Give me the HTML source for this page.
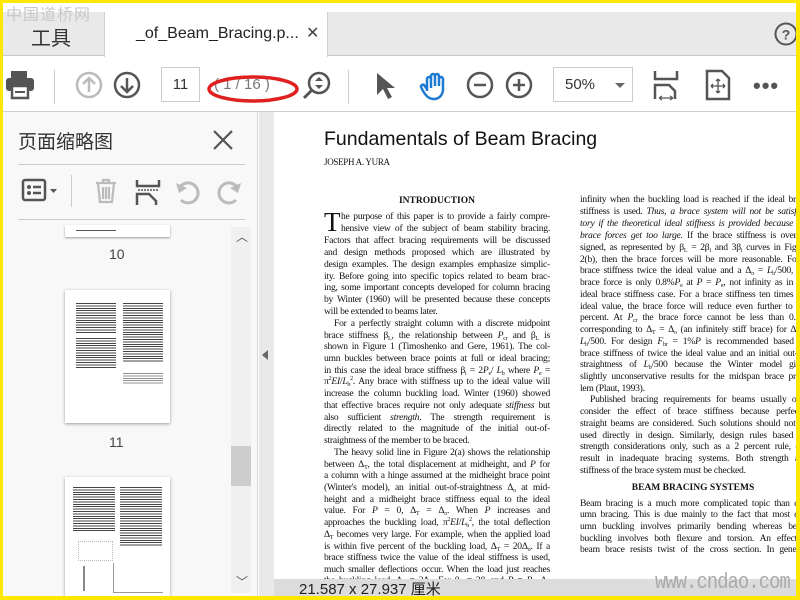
<!DOCTYPE html>
<html><head><meta charset="utf-8">
<style>
*{margin:0;padding:0;box-sizing:border-box}
body{width:800px;height:600px;position:relative;overflow:hidden;background:#ffe800;font-family:"Liberation Sans","Noto Sans CJK SC",sans-serif}
.abs{position:absolute}
#win{position:absolute;left:3px;top:3px;width:793px;height:593px;background:#fff;overflow:hidden}
.tl{position:absolute;font-family:"Liberation Serif",serif;font-size:9.6px;letter-spacing:-0.25px;word-spacing:-1.2px;color:#111;white-space:nowrap;line-height:12px;height:12px;text-align:justify;text-align-last:justify;overflow:hidden}
.tl.l{text-align-last:left;word-spacing:0}
.c1{left:321px;width:226px}
.c2{left:577px;width:228px}
i{font-style:italic}
sub{font-size:6px;vertical-align:-2px;line-height:0}
sup{font-size:6px;vertical-align:4px;line-height:0}
.blk{position:absolute;background:repeating-linear-gradient(#444 0 1px,#fff 1px 2.4px)}
</style></head><body>
<div id="win">
<div class="abs" style="left:0;top:9px;width:793px;height:44px;background:#e9e9e9;border-bottom:1px solid #c8c8c8"></div>
<div class="abs" style="left:101px;top:9px;width:224px;height:45px;background:#fff;border-left:1px solid #d0d0d0;border-right:1px solid #d0d0d0"></div>
<div class="abs" style="left:3px;top:-2px;font-size:16px;color:#c8c8c8;letter-spacing:1px">中国道桥网</div>
<div class="abs" style="left:28px;top:19px;font-size:20px;color:#333">工具</div>
<div class="abs" style="left:133px;top:22px;font-size:16px;color:#222">_of_Beam_Bracing.p...</div>
<div class="abs" style="left:303px;top:20px;font-size:16px;color:#444">✕</div>
<svg class="abs" style="left:771px;top:19px" width="24" height="28"><circle cx="12" cy="12" r="10.5" fill="none" stroke="#555" stroke-width="2"/><text x="12" y="17.5" font-size="14" font-weight="bold" text-anchor="middle" fill="#555" font-family="Liberation Sans">?</text></svg>
<div class="abs" style="left:0;top:108px;width:793px;height:1px;background:#d0d0d0"></div>
<svg class="abs" style="left:2px;top:66px" width="30" height="32"><rect x="6" y="2" width="16" height="7" fill="#555"/><rect x="1" y="9" width="28" height="13" rx="3" fill="#555"/><rect x="7" y="17" width="16" height="12" fill="#fff" stroke="#555" stroke-width="2.5"/><rect x="10" y="22" width="10" height="2" fill="#555"/></svg>
<div class="abs" style="left:51px;top:67px;width:1px;height:34px;background:#ccc"></div>
<svg class="abs" style="left:72px;top:68px" width="28" height="28"><circle cx="14" cy="14" r="12" fill="none" stroke="#bbb" stroke-width="2.5"/><path d="M14 21V8M8 13l6-6 6 6" fill="none" stroke="#bbb" stroke-width="2.5"/></svg>
<svg class="abs" style="left:110px;top:68px" width="28" height="28"><circle cx="14" cy="14" r="12" fill="none" stroke="#555" stroke-width="2.5"/><path d="M14 7v13M8 15l6 6 6-6" fill="none" stroke="#555" stroke-width="2.5"/></svg>
<div class="abs" style="left:158px;top:64px;width:39px;height:35px;border:1px solid #ccc;font-size:15px;color:#333;text-align:center;line-height:33px">11</div>
<div class="abs" style="left:211px;top:73px;font-size:15px;color:#777">( 1 / 16 )</div>
<svg class="abs" style="left:202px;top:70px" width="100" height="34"><ellipse cx="48" cy="16" rx="44" ry="12" fill="none" stroke="#e02020" stroke-width="3.5"/></svg>
<svg class="abs" style="left:299px;top:68px" width="30" height="30"><circle cx="17" cy="12" r="10" fill="none" stroke="#555" stroke-width="2.5"/><path d="M10 19l-8 8" stroke="#555" stroke-width="3"/><path d="M13 10l4-4 4 4M13 14l4 4 4-4" fill="#555"/></svg>
<div class="abs" style="left:345px;top:67px;width:1px;height:34px;background:#ccc"></div>
<svg class="abs" style="left:371px;top:68px" width="22" height="30"><path d="M3 2v22l6-6 5 10 4-2-5-9h8z" fill="#555"/></svg>
<svg class="abs" style="left:416px;top:68px" width="30" height="32"><path d="M8 20V8a2 2 0 014 0v9M12 14V5a2 2 0 014 0v10M16 14V5a2 2 0 014 0v10M20 15V8a2 2 0 014 0v10c0 6-4 10-9 10s-8-3-11-8l-2-4a2 2 0 013-2l3 4" fill="none" stroke="#1f7ad2" stroke-width="2.5" stroke-linejoin="round"/></svg>
<svg class="abs" style="left:463px;top:68px" width="28" height="28"><circle cx="14" cy="14" r="12" fill="none" stroke="#555" stroke-width="2.5"/><path d="M8 14h12" stroke="#555" stroke-width="2.5"/></svg>
<svg class="abs" style="left:502px;top:68px" width="28" height="28"><circle cx="14" cy="14" r="12" fill="none" stroke="#555" stroke-width="2.5"/><path d="M8 14h12M14 8v12" stroke="#555" stroke-width="2.5"/></svg>
<div class="abs" style="left:550px;top:64px;width:80px;height:35px;border:1px solid #ccc;font-size:15px;color:#333;line-height:33px;padding-left:11px">50%</div>
<div class="abs" style="left:612px;top:80px;width:0;height:0;border-left:5px solid transparent;border-right:5px solid transparent;border-top:5px solid #666"></div>
<svg class="abs" style="left:649px;top:66px" width="28" height="36"><path d="M3 2v8h22V2M3 30V16h14l6 6v8" fill="none" stroke="#555" stroke-width="2.5"/><path d="M7 29h14M7 29l3-2M7 29l3 2M21 29l-3-2M21 29l-3 2" stroke="#555" stroke-width="1.2"/></svg>
<svg class="abs" style="left:702px;top:66px" width="26" height="32"><path d="M2 2h15l7 7v21H2z" fill="none" stroke="#555" stroke-width="2.5"/><path d="M13 10v14M6 17h14M13 10l-2 2M13 10l2 2M13 24l-2-2M13 24l2-2M6 17l2-2M6 17l2 2M20 17l-2-2M20 17l-2 2" stroke="#555" stroke-width="1.3"/></svg>
<div class="abs" style="left:750px;top:70px;font-size:22px;color:#555;letter-spacing:1px;font-weight:bold">•••</div>
<div class="abs" style="left:0;top:109px;width:255px;height:484px;background:#f8f8f8;border-right:1px solid #d6d6d6"></div>
<div class="abs" style="left:15px;top:124px;font-size:19px;color:#333">页面缩略图</div>
<svg class="abs" style="left:208px;top:125px" width="24" height="24"><path d="M3 3l18 18M21 3L3 21" stroke="#555" stroke-width="2.2"/></svg>
<div class="abs" style="left:15px;top:161px;width:227px;height:1px;background:#ccc"></div>
<svg class="abs" style="left:18px;top:175px" width="40" height="26"><rect x="2" y="2" width="22" height="20" rx="2" fill="none" stroke="#555" stroke-width="2.5"/><circle cx="8" cy="9" r="2" fill="#555"/><circle cx="8" cy="15" r="2" fill="#555"/><path d="M12 9h8M12 15h8" stroke="#555" stroke-width="2.5"/><path d="M29 11h7l-3.5 4z" fill="#555"/></svg>
<div class="abs" style="left:68px;top:172px;width:1px;height:32px;background:#ccc"></div>
<svg class="abs" style="left:90px;top:175px" width="28" height="28"><path d="M3 5h20M10 5V2h6v3M5 5l2 19h12l2-19M10 9v12M13 9v12M16 9v12" fill="none" stroke="#bbb" stroke-width="2.2"/></svg>
<svg class="abs" style="left:131px;top:175px" width="28" height="28"><path d="M3 2v6h22V2" fill="none" stroke="#555" stroke-width="2.5"/><path d="M4 12h20" stroke="#555" stroke-width="1.5" stroke-dasharray="2 1"/><path d="M3 27V16h12l7 7v4" fill="none" stroke="#555" stroke-width="2.5"/></svg>
<svg class="abs" style="left:171px;top:175px" width="30" height="28"><path d="M7 22a10 10 0 1 0-1-13" fill="none" stroke="#bbb" stroke-width="3"/><path d="M2 5l3 10 8-5z" fill="#bbb"/></svg>
<svg class="abs" style="left:211px;top:175px" width="30" height="28"><path d="M22 22a10 10 0 1 1 1-13" fill="none" stroke="#bbb" stroke-width="3"/><path d="M27 5l-3 10-8-5z" fill="#bbb"/></svg>
<div class="abs" style="left:15px;top:216px;width:227px;height:1px;background:#ccc"></div>
<div class="abs" style="left:62px;top:222px;width:105px;height:12px;background:#fff;box-shadow:0 1px 2px #999"></div>
<div class="abs" style="left:73px;top:227px;width:40px;height:1px;background:#555"></div>
<div class="abs" style="left:106px;top:243px;font-size:14px;color:#444">10</div>
<div class="abs" style="left:62px;top:287px;width:105px;height:133px;background:#fff;box-shadow:0 1px 3px #999"></div>
<div class="blk" style="left:73px;top:300px;width:40px;height:30px"></div>
<div class="blk" style="left:73px;top:335px;width:40px;height:30px"></div>
<div class="blk" style="left:120px;top:300px;width:40px;height:60px"></div>
<div class="blk" style="left:120px;top:370px;width:40px;height:12px;opacity:.6"></div>
<div class="abs" style="left:106px;top:431px;font-size:14px;color:#444">11</div>
<div class="abs" style="left:62px;top:474px;width:105px;height:119px;background:#fff;box-shadow:0 1px 3px #999"></div>
<div class="blk" style="left:70px;top:484px;width:42px;height:45px"></div>
<div class="blk" style="left:117px;top:484px;width:42px;height:60px"></div>
<div class="abs" style="left:75px;top:538px;width:35px;height:20px;border:1px dotted #bbb"></div>
<div class="abs" style="left:80px;top:563px;width:20px;height:25px;border-left:2px solid #888"></div>
<div class="abs" style="left:110px;top:560px;width:50px;height:30px;border-left:1px solid #999;border-bottom:1px solid #999"></div>
<div class="abs" style="left:228px;top:224px;width:20px;height:366px;background:#f0f0f0"></div>
<div class="abs" style="left:228px;top:443px;width:20px;height:40px;background:#cdcdcd"></div>
<div class="abs" style="left:233px;top:225px;font-size:12px;color:#555">︿</div>
<div class="abs" style="left:233px;top:570px;font-size:12px;color:#555">﹀</div>
<div class="abs" style="left:256px;top:109px;width:15px;height:484px;background:#e9e9e9"></div>
<div class="abs" style="left:259px;top:347px;width:0;height:0;border-top:5px solid transparent;border-bottom:5px solid transparent;border-right:6px solid #666"></div>
<div class="abs" style="left:271px;top:109px;width:522px;height:484px;background:#fff;overflow:hidden">
<div style="position:absolute;left:-271px;top:-109px;width:793px;height:600px">
<div class="abs" style="left:321px;top:125px;font-size:19.5px;color:#111;font-family:'Liberation Sans',sans-serif">Fundamentals of Beam Bracing</div>
<div class="abs" style="left:321px;top:154px;font-size:9px;font-family:'Liberation Serif',serif;color:#111;letter-spacing:-.3px">JOSEPH A. YURA</div>
<div class="abs" style="left:321px;top:193px;width:226px;text-align:center;font-size:9.5px;font-weight:bold;font-family:'Liberation Serif',serif;color:#111">INTRODUCTION</div>
<div class="abs" style="left:321px;top:206px;font-size:27px;font-family:'Liberation Serif',serif;color:#111;line-height:27px">T</div>
<div class="tl" style="left:338px;width:209px;top:208px">he purpose of this paper is to provide a fairly compre-</div>
<div class="tl" style="left:338px;width:209px;top:220px">hensive view of the subject of beam stability bracing.</div>
<div class="tl c1" style="top:232px">Factors that affect bracing requirements will be discussed</div>
<div class="tl c1" style="top:244px">and design methods proposed which are illustrated by</div>
<div class="tl c1" style="top:256px">design examples. The design examples emphasize simplic-</div>
<div class="tl c1" style="top:268px">ity. Before going into specific topics related to beam brac-</div>
<div class="tl c1" style="top:279px">ing, some important concepts developed for column bracing</div>
<div class="tl c1" style="top:291px">by Winter (1960) will be presented because these concepts</div>
<div class="tl c1 l" style="top:303px">will be extended to beams later.</div>
<div class="tl" style="left:331px;width:216px;top:315px">For a perfectly straight column with a discrete midpoint</div>
<div class="tl c1" style="top:327px">brace stiffness β<sub>L</sub>, the relationship between <i>P</i><sub>cr</sub> and β<sub>L</sub> is</div>
<div class="tl c1" style="top:338px">shown in Figure 1 (Timoshenko and Gere, 1961). The col-</div>
<div class="tl c1" style="top:350px">umn buckles between brace points at full or ideal bracing;</div>
<div class="tl c1" style="top:362px">in this case the ideal brace stiffness β<sub>i</sub> = 2<i>P</i><sub>e</sub>/ <i>L</i><sub>b</sub> where <i>P</i><sub>e</sub> =</div>
<div class="tl c1" style="top:373px">π<sup>2</sup><i>EI</i>/<i>L</i><sub>b</sub><sup>2</sup>. Any brace with stiffness up to the ideal value will</div>
<div class="tl c1" style="top:385px">increase the column buckling load. Winter (1960) showed</div>
<div class="tl c1" style="top:397px">that effective braces require not only adequate <i>stiffness</i> but</div>
<div class="tl c1" style="top:409px">also sufficient <i>strength</i>. The strength requirement is</div>
<div class="tl c1" style="top:420px">directly related to the magnitude of the initial out-of-</div>
<div class="tl c1 l" style="top:432px">straightness of the member to be braced.</div>
<div class="tl" style="left:331px;width:216px;top:444px">The heavy solid line in Figure 2(a) shows the relationship</div>
<div class="tl c1" style="top:456px">between Δ<sub>T</sub>, the total displacement at midheight, and <i>P</i> for</div>
<div class="tl c1" style="top:467px">a column with a hinge assumed at the midheight brace point</div>
<div class="tl c1" style="top:479px">(Winter's model), an initial out-of-straightness Δ<sub>o</sub> at mid-</div>
<div class="tl c1" style="top:491px">height and a midheight brace stiffness equal to the ideal</div>
<div class="tl c1" style="top:502px">value. For <i>P</i> = 0, Δ<sub>T</sub> = Δ<sub>o</sub>. When <i>P</i> increases and</div>
<div class="tl c1" style="top:514px">approaches the buckling load, π<sup>2</sup><i>EI</i>/<i>L</i><sub>b</sub><sup>2</sup>, the total deflection</div>
<div class="tl c1" style="top:526px">Δ<sub>T</sub> becomes very large. For example, when the applied load</div>
<div class="tl c1" style="top:538px">is within five percent of the buckling load, Δ<sub>T</sub> = 20Δ<sub>o</sub>. If a</div>
<div class="tl c1" style="top:549px">brace stiffness twice the value of the ideal stiffness is used,</div>
<div class="tl c1" style="top:561px">much smaller deflections occur. When the load just reaches</div>
<div class="tl c1" style="top:572px">the buckling load, Δ<sub>T</sub> = 2Δ<sub>o</sub>. For β<sub>L</sub> = 3β<sub>i</sub> and <i>P</i> = <i>P</i><sub>e</sub>, Δ<sub>T</sub></div>

<div class="tl c2" style="top:191px">infinity when the buckling load is reached if the ideal brace</div>
<div class="tl c2" style="top:203px">stiffness is used. <i>Thus, a brace system will not be satisfac-</i></div>
<div class="tl c2" style="top:215px"><i>tory if the theoretical ideal stiffness is provided because the</i></div>
<div class="tl c2" style="top:227px"><i>brace forces get too large.</i> If the brace stiffness is overde-</div>
<div class="tl c2" style="top:239px">signed, as represented by β<sub>L</sub> = 2β<sub>i</sub> and 3β<sub>i</sub> curves in Figure</div>
<div class="tl c2" style="top:251px">2(b), then the brace forces will be more reasonable. For a</div>
<div class="tl c2" style="top:262px">brace stiffness twice the ideal value and a Δ<sub>o</sub> = <i>L</i><sub>b</sub>/500, the</div>
<div class="tl c2" style="top:274px">brace force is only 0.8%<i>P</i><sub>e</sub> at <i>P</i> = <i>P</i><sub>e</sub>, not infinity as in the</div>
<div class="tl c2" style="top:286px">ideal brace stiffness case. For a brace stiffness ten times the</div>
<div class="tl c2" style="top:298px">ideal value, the brace force will reduce even further to 0.5</div>
<div class="tl c2" style="top:309px">percent. At <i>P</i><sub>cr</sub> the brace force cannot be less than 0.4%</div>
<div class="tl c2" style="top:321px">corresponding to Δ<sub>T</sub> = Δ<sub>o</sub> (an infinitely stiff brace) for Δ<sub>o</sub> =</div>
<div class="tl c2" style="top:333px"><i>L</i><sub>b</sub>/500. For design <i>F</i><sub>br</sub> = 1%<i>P</i> is recommended based on</div>
<div class="tl c2" style="top:345px">brace stiffness of twice the ideal value and an initial out-of-</div>
<div class="tl c2" style="top:356px">straightness of <i>L</i><sub>b</sub>/500 because the Winter model gives</div>
<div class="tl c2" style="top:368px">slightly unconservative results for the midspan brace prob-</div>
<div class="tl c2 l" style="top:380px">lem (Plaut, 1993).</div>
<div class="tl" style="left:587px;width:218px;top:391px">Published bracing requirements for beams usually only</div>
<div class="tl c2" style="top:403px">consider the effect of brace stiffness because perfectly</div>
<div class="tl c2" style="top:415px">straight beams are considered. Such solutions should not be</div>
<div class="tl c2" style="top:427px">used directly in design. Similarly, design rules based on</div>
<div class="tl c2" style="top:438px">strength considerations only, such as a 2 percent rule, can</div>
<div class="tl c2" style="top:450px">result in inadequate bracing systems. Both strength and</div>
<div class="tl c2 l" style="top:462px">stiffness of the brace system must be checked.</div>
<div class="abs" style="left:577px;top:480px;width:226px;text-align:center;font-size:9.5px;font-weight:bold;font-family:'Liberation Serif',serif;color:#111">BEAM BRACING SYSTEMS</div>
<div class="tl c2" style="top:495px">Beam bracing is a much more complicated topic than col-</div>
<div class="tl c2" style="top:506px">umn bracing. This is due mainly to the fact that most col-</div>
<div class="tl c2" style="top:518px">umn buckling involves primarily bending whereas beam</div>
<div class="tl c2" style="top:530px">buckling involves both flexure and torsion. An effective</div>
<div class="tl c2" style="top:541px">beam brace resists twist of the cross section. In general,</div>
</div></div>
<div class="abs" style="left:271px;top:576px;width:522px;height:17px;background:#dcdcdc"></div>
<div class="abs" style="left:296px;top:578px;font-size:15px;color:#222;line-height:18px">21.587 x 27.937 厘米</div>
<div class="abs" style="left:652px;top:567px;font-size:22px;color:#aaa;font-family:'Liberation Mono',monospace;letter-spacing:-1px;transform:scaleX(.85);transform-origin:left">www.cndao.com</div>
</div>
</body></html>
